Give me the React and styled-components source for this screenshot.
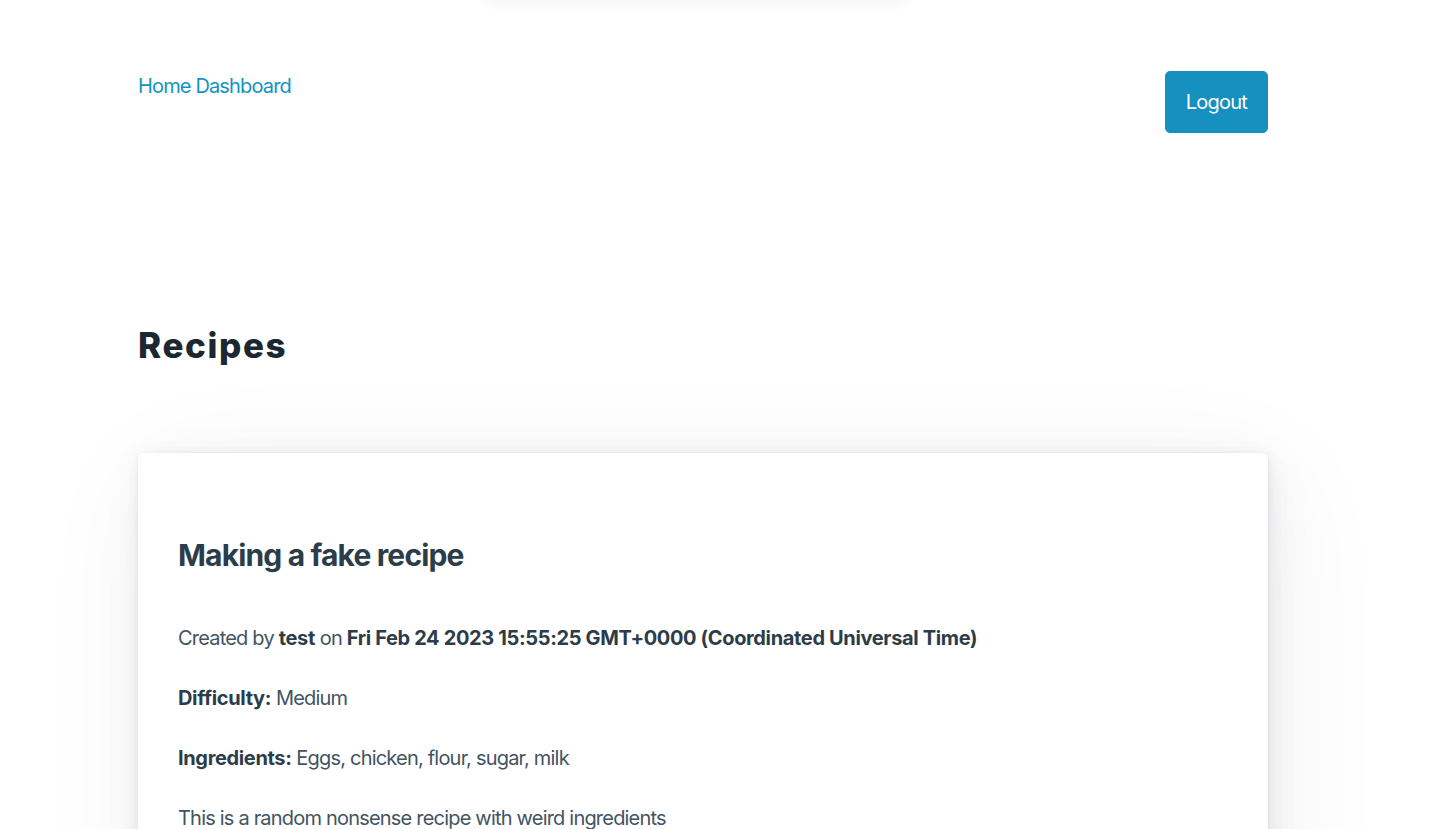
import React from "react";
import styled, { createGlobalStyle } from "styled-components";

const GlobalStyle = createGlobalStyle`
  html, body { margin: 0; padding: 0; background: #fff; }
  body {
    padding-right: 30px;
    font-family: Inter, "Noto Sans", "Liberation Sans", sans-serif;
    font-size: 20px;
    line-height: 1.5;
    color: #415462;
    letter-spacing: -0.8px;
    -webkit-font-smoothing: antialiased;
  }
  * { box-sizing: border-box; }
`;

const TopShade = styled.div`
  position: absolute;
  top: -40px;
  left: 485px;
  width: 420px;
  height: 40px;
  box-shadow: 0 2px 14px rgba(27, 40, 50, 0.06);
  pointer-events: none;
`;

const Main = styled.main`
  width: 1130px;
  margin: 0 auto;
  padding-top: 71px;
  padding-bottom: 80px;
`;

const Nav = styled.nav`
  display: flex;
  justify-content: space-between;
  align-items: flex-start;
`;

const NavLink = styled.a`
  color: #1095c1;
  text-decoration: none;
  font-size: 20px;
  line-height: 30px;
  letter-spacing: -0.85px;
`;

const Button = styled.button`
  font-family: inherit;
  font-size: 20px;
  line-height: 30px;
  letter-spacing: -0.8px;
  padding: 15px 20px;
  border: 1px solid #1590bf;
  border-radius: 5px;
  background: #1590bf;
  color: #fff;
  cursor: pointer;
`;

const PageTitle = styled.h2`
  margin: 186px 0 82px;
  font-size: 35px;
  line-height: 52px;
  font-weight: 800;
  letter-spacing: 1.6px;
  color: #1b2832;
`;

const Card = styled.article`
  background: #fff;
  border-radius: 5px;
  padding: 80px 40px;
  box-shadow:
    0.29px 0.58px 3.5px rgba(27, 40, 50, 0.017),
    0.67px 1.34px 8px rgba(27, 40, 50, 0.024),
    1.25px 2.5px 15px rgba(27, 40, 50, 0.03),
    2.25px 4.5px 27px rgba(27, 40, 50, 0.036),
    4.17px 8.34px 50px rgba(27, 40, 50, 0.043),
    10px 20px 120px rgba(27, 40, 50, 0.06),
    0 0 0 1.25px rgba(27, 40, 50, 0.015);
`;

const CardTitle = styled.h3`
  margin: 0 0 45px;
  font-size: 30px;
  line-height: 45px;
  font-weight: 700;
  letter-spacing: -0.85px;
  color: #2c3d49;
`;

const Para = styled.p`
  margin: 0 0 30px;
  font-size: 20px;
  line-height: 30px;
  color: #415462;
  strong { font-weight: 700; color: #2c3d49; letter-spacing: -0.35px; }
`;

export default function App() {
  return (
    <>
      <GlobalStyle />
      <TopShade />
      <Main>
        <Nav>
          <NavLink href="#">Home Dashboard</NavLink>
          <Button type="button">Logout</Button>
        </Nav>
        <PageTitle>Recipes</PageTitle>
        <Card>
          <CardTitle>Making a fake recipe</CardTitle>
          <Para>
            Created by <strong>test</strong> on{" "}
            <strong>Fri Feb 24 2023 15:55:25 GMT+0000 (Coordinated Universal Time)</strong>
          </Para>
          <Para>
            <strong>Difficulty:</strong> Medium
          </Para>
          <Para>
            <strong>Ingredients:</strong> Eggs, chicken, flour, sugar, milk
          </Para>
          <Para>This is a random nonsense recipe with weird ingredients</Para>
        </Card>
      </Main>
    </>
  );
}
